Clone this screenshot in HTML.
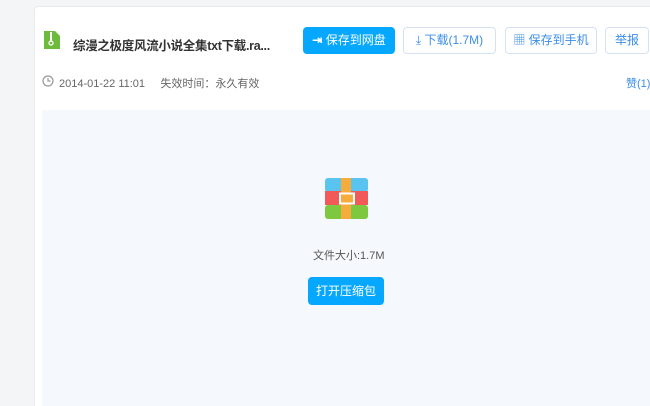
<html><head><style>
html,body{margin:0;width:650px;height:406px;overflow:hidden}
body{background:#f4f5f7;font-family:"Liberation Sans","Noto Sans CJK SC",sans-serif;position:relative}
.card{position:absolute;left:34px;top:6px;width:615px;height:399px;background:#fff;border:1px solid #e8eaee;border-bottom:none;border-right:none;border-radius:4px 0 0 0}
.a{position:absolute;white-space:nowrap}
.btn{position:absolute;top:27px;height:27px;border:1px solid #d4e2f3;border-radius:4px;box-sizing:border-box;background:#fff;color:#3a8ee6;font-size:12px;line-height:25px;text-align:center;white-space:nowrap}
</style></head><body>
<div class="card"></div>
<svg class="a" style="left:43px;top:30px" width="18" height="20"><path d="M1 1h11l5 5v13H1z" fill="#6cbb3c"/><rect x="7" y="2" width="2" height="10" fill="#fff"/><circle cx="8" cy="13" r="2" fill="none" stroke="#fff" stroke-width="1.3"/></svg>
<div class="a" style="left:73px;top:35px;font-size:12.5px;color:#333;font-weight:bold;letter-spacing:-0.3px">综漫之极度风流小说全集txt下载.ra...</div>
<div class="btn" style="left:303px;width:92px;background:#06a7ff;border-color:#06a7ff;color:#fff"><span style="font-weight:bold">&#x21E5;</span> 保存到网盘</div>
<div class="btn" style="left:403px;width:93px">⤓ 下载(1.7M)</div>
<div class="btn" style="left:505px;width:92px">▦ 保存到手机</div>
<div class="btn" style="left:605px;width:44px">举报</div>
<svg class="a" style="left:42px;top:75px" width="12" height="12"><circle cx="6" cy="6" r="5" fill="none" stroke="#999" stroke-width="1.2"/><path d="M6 3v3h2.5" fill="none" stroke="#999" stroke-width="1.2"/></svg>
<div class="a" style="left:59px;top:75px;font-size:11px;color:#666">2014-01-22 11:01 &nbsp;&nbsp;&nbsp; 失效时间：永久有效</div>
<div class="a" style="left:626px;top:75px;font-size:11px;color:#3a8ee6">赞(1)</div>
<div class="a" style="left:42px;top:110px;width:608px;height:296px;background:#f5f8fc"></div>
<svg class="a" style="left:325px;top:178px" width="43" height="41"><rect width="43" height="14" fill="#59c4f0" rx="3"/><rect y="27" width="43" height="14" fill="#7dc83e" rx="3"/><rect y="13" width="43" height="14" fill="#f25a5a"/><rect x="16" width="10" height="41" fill="#f6ac3c"/><rect x="15" y="15.5" width="14" height="10" fill="#f6ac3c" stroke="#fff" stroke-width="2"/></svg>
<div class="a" style="left:313px;top:247px;font-size:11px;color:#555">文件大小:1.7M</div>
<div class="a" style="left:308px;top:277px;width:76px;height:28px;background:#06a7ff;border-radius:4px;color:#fff;font-size:12px;line-height:28px;text-align:center">打开压缩包</div>
</body></html>
